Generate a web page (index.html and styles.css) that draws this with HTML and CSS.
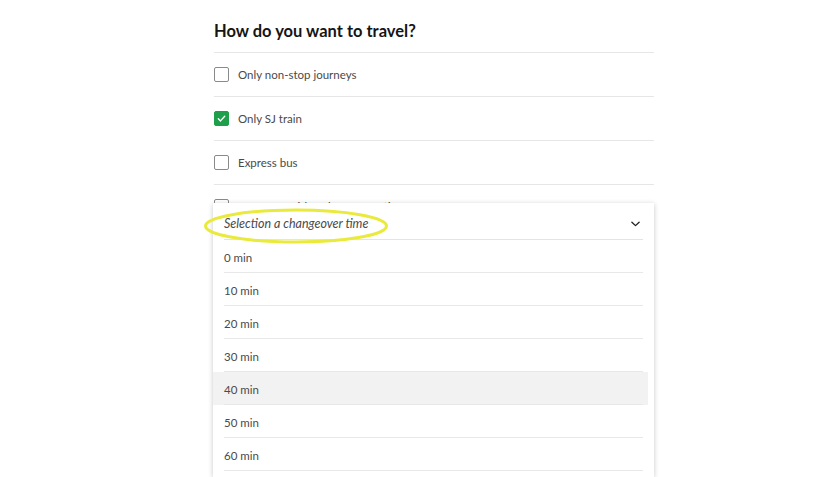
FILE: index.html
```
<!DOCTYPE html>
<html lang="en">
<head>
<meta charset="utf-8">
<link rel="stylesheet" href="styles.css">
</head>
<body>
<div class="page">
  <h2 class="title">How do you want to travel?</h2>
  <div class="row"><span class="box"></span><span class="label">Only non-stop journeys</span></div>
  <div class="row"><span class="box checked"><svg viewBox="0 0 15 15" width="15" height="15"><path d="M4.3 7.8 L6.5 9.9 L10.7 5.3" fill="none" stroke="#fff" stroke-width="1.4" stroke-linecap="round" stroke-linejoin="round"/></svg></span><span class="label">Only SJ train</span></div>
  <div class="row"><span class="box"></span><span class="label">Express bus</span></div>
  <div class="row"><span class="box"></span><span class="label">Non-stop with a changeover time</span></div>

  <div class="dropdown">
    <div class="dd-head">
      <span class="placeholder">Selection a changeover time</span>
      <svg class="chev" viewBox="0 0 10 6" width="9" height="6"><path d="M1 1 L5 4.8 L9 1" fill="none" stroke="#222" stroke-width="1.5" stroke-linecap="round" stroke-linejoin="round"/></svg>
    </div>
    <ul class="options">
      <li class="opt">0 min</li>
      <li class="opt">10 min</li>
      <li class="opt">20 min</li>
      <li class="opt">30 min</li>
      <li class="opt hover">40 min</li>
      <li class="opt">50 min</li>
      <li class="opt">60 min</li>
    </ul>
    <svg class="mark" viewBox="0 0 186 38" width="186" height="38"><ellipse cx="93" cy="19" rx="90.5" ry="16" fill="none" stroke="#eaea3c" stroke-width="3"/></svg>
  </div>
</div>
</body>
</html>
```
FILE: styles.css
```
* { box-sizing: border-box; }
html, body { overflow: hidden; }
body {
  margin: 0;
  background: #fff;
  font-family: Lato, "Open Sans", sans-serif;
  color: #444;
}
.page {
  position: relative;
  width: 440px;
  margin-left: 214px;
  height: 477px;
}
.title {
  margin: 0;
  padding: 21px 0 11px;
  font-size: 16.5px;
  line-height: 20px;
  font-weight: 700;
  color: #151515;
  border-bottom: 1px solid #e6e6e6;
}
.row {
  display: flex;
  align-items: center;
  gap: 9px;
  height: 44px;
  border-bottom: 1px solid #e6e6e6;
}
.box {
  width: 15px;
  height: 15px;
  border: 1px solid #8a8a8a;
  border-radius: 2px;
  flex: none;
  display: flex;
}
.box.checked {
  background: #1f9e4c;
  border-color: #1f9e4c;
}
.box.checked svg { margin: -1px; }
.label {
  font-size: 11.5px;
  color: #4a4a4a;
}
.dropdown {
  position: absolute;
  top: 203px;
  left: -1px;
  width: 441px;
  background: #fff;
  box-shadow: 0 1px 5px rgba(0, 0, 0, 0.22);
  padding-bottom: 6px;
}
.dd-head {
  display: flex;
  align-items: center;
  justify-content: space-between;
  height: 37px;
  margin: 0 11px;
  padding: 5px 3px 0 0;
  border-bottom: 1px solid #e4e4e4;
}
.placeholder {
  font-style: italic;
  font-size: 12.5px;
  color: #4a4a4a;
}
.options {
  list-style: none;
  margin: 0 6px 0 0;
  padding: 0;
}
.opt {
  display: flex;
  align-items: center;
  height: 33px;
  padding: 1px 0 0 11px;
  font-size: 11.5px;
  color: #4a4a4a;
  position: relative;
}
.opt::after {
  content: "";
  position: absolute;
  left: 11px;
  right: 5px;
  bottom: 0;
  height: 1px;
  background: #e8e8e8;
}
.opt.hover { background: #f3f2f2; }
.mark {
  position: absolute;
  left: -10px;
  top: 4px;
}
```
